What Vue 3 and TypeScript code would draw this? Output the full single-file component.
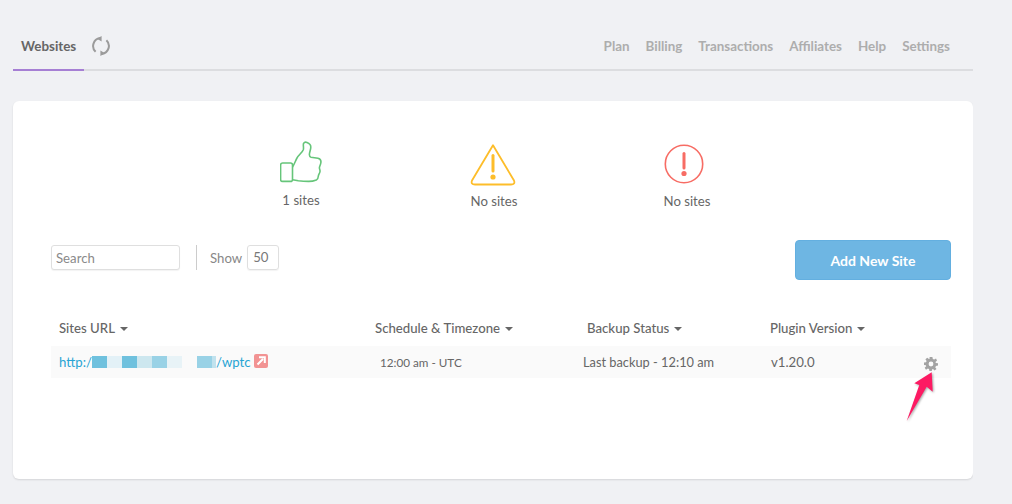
<script setup lang="ts">
const navLinks: string[] = ['Plan', 'Billing', 'Transactions', 'Affiliates', 'Help', 'Settings']
const columns: string[] = ['Sites URL', 'Schedule & Timezone', 'Backup Status', 'Plugin Version']
const blurBlocks: { w: number; c: string }[] = [
  { w: 15, c: '#6fc1de' }, { w: 15, c: '#e3f1f7' }, { w: 15, c: '#6fc1de' },
  { w: 15, c: '#cde7ef' }, { w: 15, c: '#99d2e6' }, { w: 15, c: '#e8f3f7' },
  { w: 15, c: 'transparent' }, { w: 15, c: '#99d2e6' }, { w: 4, c: '#c0e2ee' },
]
</script>

<template>
  <div class="page">
    <header class="nav">
      <div class="tab">Websites</div>
      <svg class="sync" width="20" height="20" viewBox="0 0 20 20" fill="none">
        <path d="M4.6 15.8A8 8 0 0 1 9 2.1M15.4 4.2A8 8 0 0 1 11 17.9" stroke="#9b9b9b" stroke-width="2" />
        <path d="M10.6 0 10.6 5.6 6 2.8Z M9.4 14.4 9.4 20 14 17.2Z" fill="#9b9b9b" />
      </svg>
      <nav class="links">
        <span v-for="l in navLinks" :key="l">{{ l }}</span>
      </nav>
    </header>

    <main class="card">
      <section class="stats">
        <div class="stat">
          <svg class="thumb" width="43" height="44" viewBox="0 0 43 44" fill="none" stroke="#66c57a" stroke-width="1.6" stroke-linejoin="round">
            <rect x="0.6" y="22" width="11.9" height="18.4" rx="2" />
            <path d="M12.5 26C14.5 23 15.5 19.5 17 17C19 13.5 22 12 23.3 8.7C24 6.5 22.8 4 23.6 2.4C24.4 1 25.8 1 27 1.5C29.5 2.5 30.8 4 30.8 6C30.8 9 29.3 11.5 29.4 13.7C29.5 15.5 29.8 16 31 16.3L38 17.2C40.5 17.8 41.2 20 40.8 22C40.5 24 39.3 25.5 39.4 27C39.6 28.5 40.2 29 40 30.5C39.8 32.5 38.4 33.5 38.3 35.3C38.2 37 37.8 38.4 36.4 38.9C33.5 40 31 40.5 28.3 40.4C24.5 40.3 21 40 18.3 39.7L12.5 38.7" />
          </svg>
          <div class="stat-label first">1 sites</div>
        </div>
        <div class="stat">
          <svg class="warn" width="46" height="46" viewBox="0 0 46 46" fill="none">
            <path d="M23 4.2 44 39.5Q45.5 43.5 41 43.5H5Q0.5 43.5 2 39.5Z" stroke="#fdbd2a" stroke-width="1.8" stroke-linejoin="round" />
            <path d="M23 14.5V30" stroke="#fdbd2a" stroke-width="3" stroke-linecap="round" />
            <circle cx="23" cy="36" r="2.6" fill="#fdbd2a" />
          </svg>
          <div class="stat-label">No sites</div>
        </div>
        <div class="stat">
          <svg class="err" width="40" height="40" viewBox="0 0 40 40" fill="none">
            <circle cx="20" cy="20" r="18.7" stroke="#f76c64" stroke-width="1.6" />
            <path d="M20 9.5V24" stroke="#f76c64" stroke-width="3" stroke-linecap="round" />
            <circle cx="20" cy="29.5" r="2.6" fill="#f76c64" />
          </svg>
          <div class="stat-label">No sites</div>
        </div>
      </section>

      <section class="toolbar">
        <input class="search" placeholder="Search" />
        <span class="divider"></span>
        <span class="show">Show</span>
        <span class="count">50</span>
        <button class="add">Add New Site</button>
      </section>

      <section class="table">
        <div class="thead">
          <div v-for="c in columns" :key="c" class="th">{{ c }}<i class="caret"></i></div>
        </div>
        <div class="tr">
          <div class="url">
            <span>http:/</span><span class="blur"><i v-for="(b, i) in blurBlocks" :key="i" :style="{ width: b.w + 'px', background: b.c }"></i></span><span>/wptc</span>
            <svg class="ext" width="14" height="14" viewBox="0 0 14 14">
              <rect width="14" height="14" rx="2" fill="#f29393" />
              <path d="M3.5 10.5 9 5M5 3.2H10.8V9" fill="none" stroke="#fff" stroke-width="2" />
            </svg>
          </div>
          <div class="sched">12:00 am - UTC</div>
          <div class="backup">Last backup - 12:10 am</div>
          <div class="ver">v1.20.0</div>
          <svg class="gear" width="14" height="14" viewBox="0 0 14 14">
            <path fill="#a3a3a3" fill-rule="evenodd" d="M5.6 0H8.4L8.8 2 10.2 2.6 12 1.5 13 3.6 11.5 4.9 11.8 6 14 6.3V8.6L11.9 9 11.3 10.4 12.5 12 10.6 13.4 9 12 8 12.4 7.8 14H5.4L5 12.1 3.9 11.6 2 12.7.7 10.8 2.2 9.3 1.9 8.3 0 7.9V5.6L2 5.2 2.6 3.9 1.4 2.2 3.3.8 4.9 2.1 5.5 1.9ZM7 4.6A2.4 2.4 0 1 0 7 9.4 2.4 2.4 0 1 0 7 4.6Z" />
          </svg>
        </div>
      </section>

      <svg class="pointer" width="30" height="50" viewBox="0 0 30 50">
        <path d="M26.7.3 27.7 19.7 21.7 14.7 1.7 49 14.3 13 9.3 11.3Z" fill="#fd1a63" />
      </svg>
    </main>
  </div>
</template>

<style>
html, body { margin: 0; background: #f0f1f4; }
</style>

<style scoped>
.page {
  width: 960px;
  height: 504px;
  padding-left: 13px;
  font-family: Lato, "Open Sans", sans-serif;
  color: #666;
  overflow: hidden;
}
.nav {
  display: flex;
  align-items: center;
  height: 69px;
  border-bottom: 2px solid #dcdde0;
  position: relative;
}
.tab {
  width: 71px;
  line-height: 92px;
  box-sizing: border-box;
  padding-left: 8px;
  font-size: 13.4px;
  font-weight: 700;
  color: #666;
  border-bottom: 2px solid #a67fd4;
  margin-bottom: -2px;
  height: 71px;
}
.sync { margin: 22px 0 0 7px; }
.links {
  margin-left: auto;
  padding: 23px 23px 0 0;
  display: flex;
  gap: 16px;
  font-size: 13.4px;
  font-weight: 700;
  color: #adadad;
}
.card {
  position: relative;
  box-sizing: border-box;
  margin-top: 30px;
  height: 378px;
  background: #fff;
  border-radius: 6px;
  box-shadow: 0 1px 2px rgba(0, 0, 0, 0.12);
  padding: 0 22px 0 38px;
}
.stats {
  display: flex;
  justify-content: center;
  height: 139px;
  padding-top: 40px;
  box-sizing: border-box;
  margin-left: -14px;
}
.stat {
  width: 193px;
  display: flex;
  flex-direction: column;
  align-items: center;
  height: 70px;
}
.stat svg { display: block; flex: none; }
.stat .thumb { margin-bottom: -1px; }
.stat .warn { margin-left: -3px; }
.stat .err { margin: 3px 0 3px -6px; }
.stat-label {
  font-size: 13.2px;
  line-height: 18px;
  margin-top: 5px;
  color: #666;
}
.stat-label.first { margin-top: 7px; }
.toolbar {
  display: flex;
  align-items: center;
  height: 40px;
  font-size: 13.2px;
}
.search {
  box-sizing: border-box;
  width: 129px;
  height: 25px;
  border: 1px solid #dfdfdf;
  border-radius: 3px;
  padding: 0 4px;
  font: 13.2px Lato, sans-serif;
  color: #888;
  box-shadow: 0 1px 1px rgba(0, 0, 0, 0.05);
  outline: none;
  margin-bottom: 5px;
}
.search::placeholder { color: #8a8a8a; opacity: 1; }
.divider {
  width: 1px;
  height: 25px;
  background: #ccc;
  margin: 0 13px 5px 16px;
}
.show { color: #888; margin-bottom: 5px; }
.count {
  box-sizing: border-box;
  width: 32px;
  height: 25px;
  line-height: 23px;
  margin: 0 0 5px 5px;
  padding-left: 5px;
  border: 1px solid #dfdfdf;
  border-radius: 3px;
  color: #777;
  box-shadow: 0 1px 1px rgba(0, 0, 0, 0.05);
}
.add {
  margin-left: auto;
  width: 156px;
  height: 40px;
  border: 1px solid #63afe0;
  border-radius: 4px;
  background: #6eb6e3;
  color: #fff;
  font: 700 14px Lato, sans-serif;
}
.table { margin-top: 37px; }
.thead {
  position: relative;
  display: grid;
  grid-template-columns: 316px 212px 183px 1fr;
  padding-left: 8px;
  height: 29px;
  line-height: 22px;
}
.th { font-size: 13.2px; color: #666; font-weight: 500; }
.caret {
  display: inline-block;
  margin-left: 5px;
  vertical-align: 2px;
  border-left: 4px solid transparent;
  border-right: 4px solid transparent;
  border-top: 4px solid #666;
}
.tr {
  position: relative;
  display: grid;
  grid-template-columns: 321px 203px 188px 1fr;
  align-items: center;
  height: 32px;
  padding-left: 8px;
  background: #fafafa;
  color: #666;
}
.url {
  display: flex;
  align-items: center;
  font-size: 13.2px;
  color: #27a4d4;
}
.blur { display: flex; height: 12px; }
.blur i { display: block; height: 12px; }
.ext { margin-left: 3px; margin-top: -2px; }
.sched { font-size: 11.7px; }
.backup { font-size: 12.8px; }
.ver { font-size: 13.2px; }
.gear { position: absolute; left: 873px; top: 11px; }
.pointer {
  position: absolute;
  left: 892px;
  top: 271px;
  filter: drop-shadow(1px 1px 1px rgba(0, 0, 0, 0.35));
}
</style>
